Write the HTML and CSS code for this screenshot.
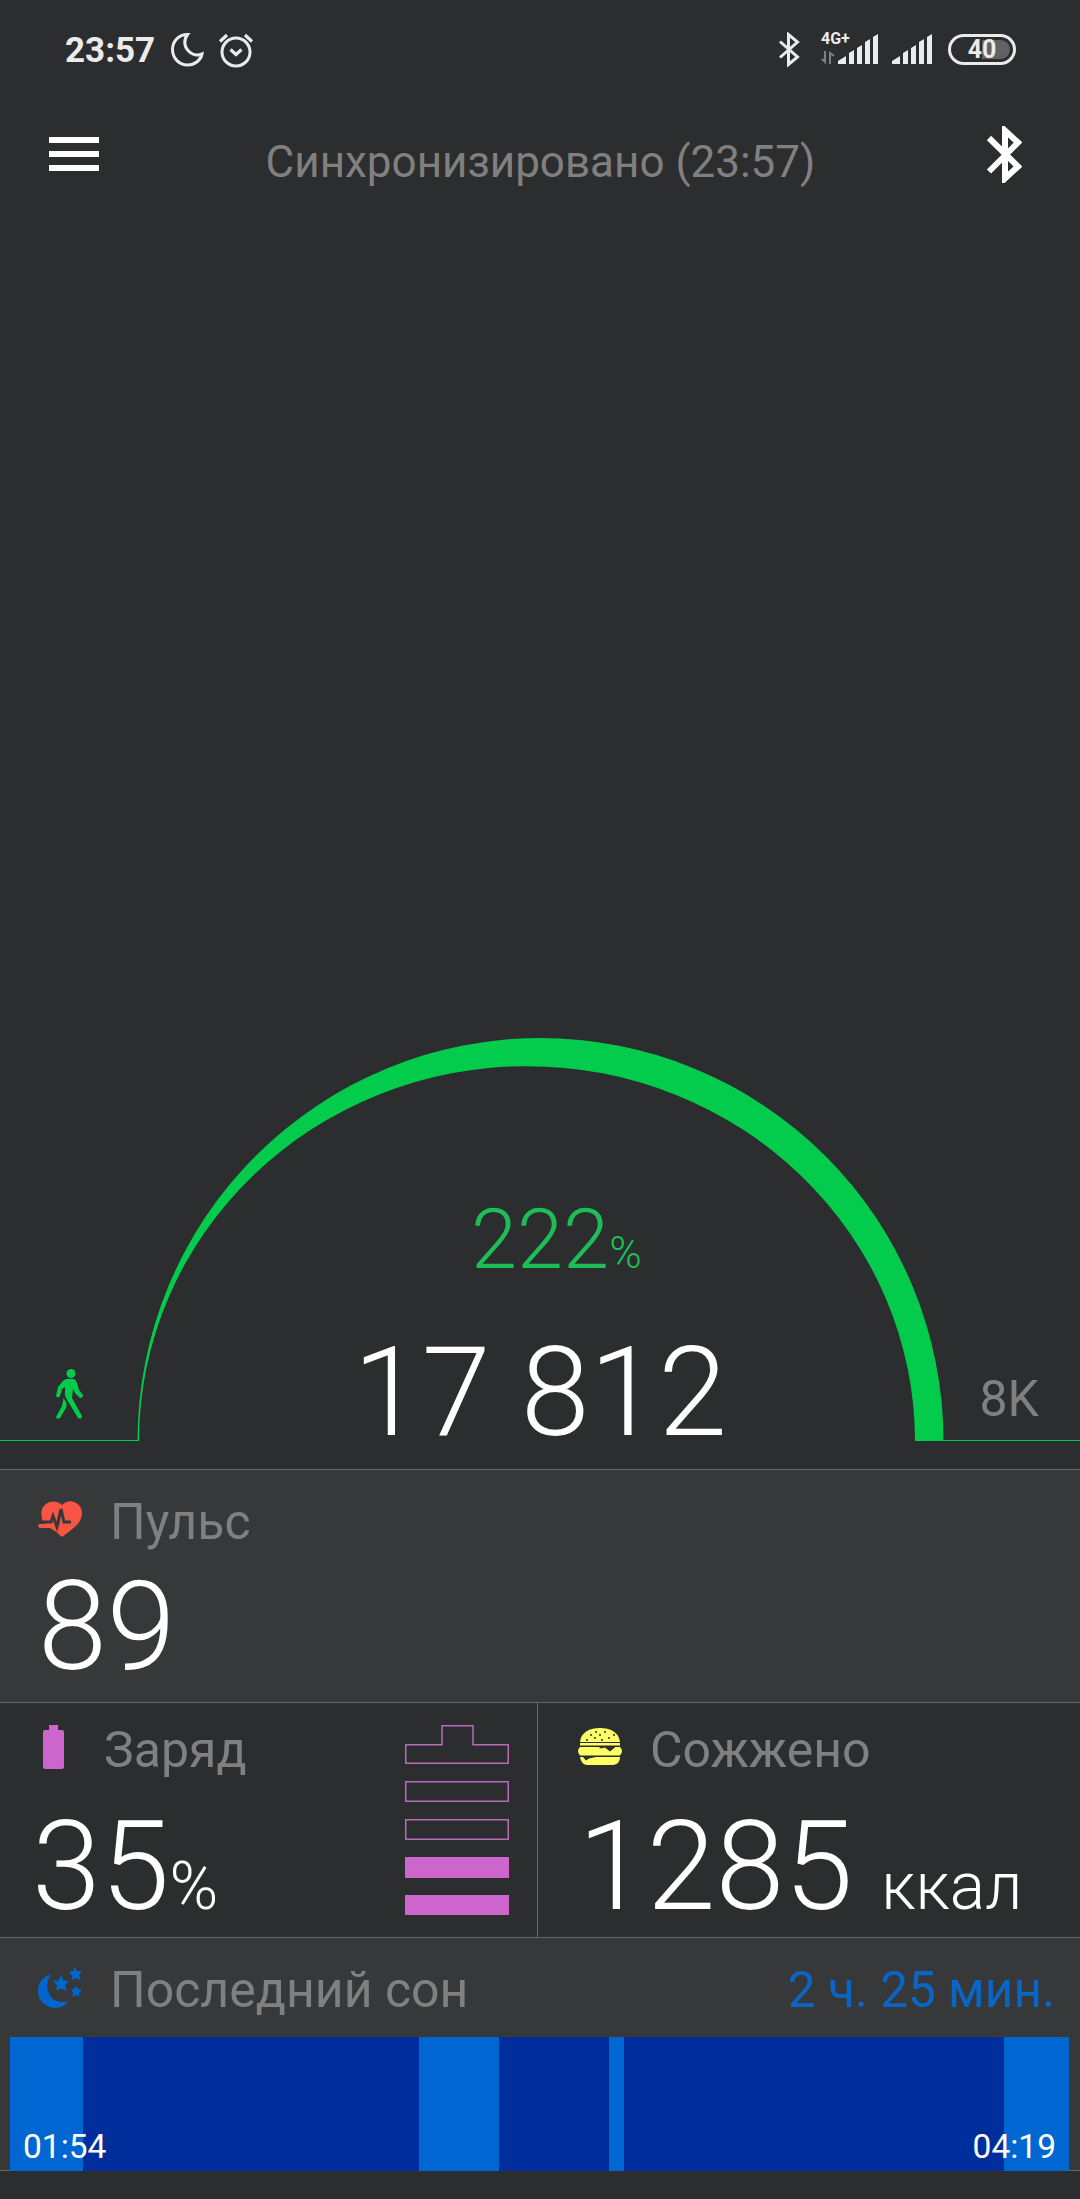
FILE: index.html
```html
<!DOCTYPE html>
<html lang="ru">
<head>
    <meta charset="UTF-8">
    <meta name="viewport" content="width=device-width, initial-scale=1.0">
    <title>Активность</title>
    <link rel="stylesheet" href="styles.css">
</head>
<body>
    <!-- Status bar -->
    <div class="status-bar">
        <span class="clock">23:57</span>
        <svg class="icon-dnd" width="34" height="36" viewBox="0 0 34 36">
            <path d="M17.500 2.500C8.500 2.500 2.500 9.500 2.500 17.500C2.500 26.500 9.500 33 17.500 33C25 33 31 28 32 22C27 24 22 22.500 18.500 19C14 14.500 13.500 8 17.500 2.500Z"/>
        </svg>
        <svg class="icon-alarm" width="36" height="36" viewBox="0 0 36 36">
            <circle cx="18" cy="20" r="14"/>
            <path d="M12.500 17.500L18 22.500L23.500 17.500M2 9.500L9 3M27 3L34 9.500"/>
        </svg>
        <div class="status-right">
            <svg class="icon-bt" width="22" height="35" viewBox="0 0 22 35">
                <path d="M2 9.500L19.500 25L10.500 32.500V2.500L19.500 10L2 25.500"/>
            </svg>
            <div class="network">
                <div class="network-type">
                    <span>4G+</span>
                    <svg width="14" height="13" viewBox="0 0 14 13">
                        <path d="M4 0V11L1 8M9 13V2L13 5"/>
                    </svg>
                </div>
                <svg class="icon-signal" width="41" height="30" viewBox="0 0 41 30">
                    <path d="M0 30V27L8 22V30ZM11 30V19L16 16V30ZM19 30V14L24 11V30ZM27 30V8L32 5V30ZM35 30V3L40 0V30Z"/>
                </svg>
            </div>
            <svg class="icon-signal" width="41" height="30" viewBox="0 0 41 30">
                <path d="M0 30V27L8 22V30ZM11 30V19L16 16V30ZM19 30V14L24 11V30ZM27 30V8L32 5V30ZM35 30V3L40 0V30Z"/>
            </svg>
            <div class="phone-battery">40</div>
        </div>
    </div>

    <!-- Header -->
    <header class="header">
        <div class="menu"><i></i><i></i><i></i></div>
        <h1>Синхронизировано (23:57)</h1>
        <svg class="header-bt" width="36" height="57" viewBox="0 0 36 57">
            <path d="M3 12L32 40.500L19 52.500V4.500L32 16.500L3 45.500"/>
        </svg>
    </header>

    <!-- Steps -->
    <section class="steps">
        <svg class="steps-arc" width="1080" height="403" viewBox="0 0 1080 403">
            <path d="M137.500 403A403 403 0 0 1 943.500 403H915A388 375 0 0 0 139 403Z"/>
            <path d="M0 402H139V403H0ZM943 402H1080V403H943Z"/>
            <g transform="translate(56 331)">
                <circle cx="15" cy="4.500" r="4.500"/>
                <path d="M10 10H18Q20 11 21 14L23 21L27 26Q27 29 24 29L19 24L17 20L16 29L26 47Q26 51 22 49L10 29Q8 26 9 23V18L6 20L4 27Q2 30 0 27L2 18L7 12Z"/>
                <path d="M7.500 29L10.500 34V38L4 49Q1 51 0 48L6 37Z"/>
            </g>
        </svg>
        <div class="steps-percent">222<small>%</small></div>
        <div class="steps-count">17 812</div>
        <div class="steps-goal">8K</div>
    </section>

    <!-- Pulse -->
    <section class="card pulse">
        <div class="card-title">
            <svg width="44" height="36" viewBox="0 0 44 36">
                <path class="heart" d="M24 4C20 0 13-1 8 3C4 6 3 10 3.500 14C3.500 18 5 21 7 23H1Q-1 26 2 27H12Q18 30 24 36Q31 31 38 25C46 17 46 6 38 2C33-1 28 0 24 4Z"/>
                <path class="beat" d="M1 21H13L15 15L19 26L23 8L26 21H33"/>
            </svg>
            <h2>Пульс</h2>
        </div>
        <div class="value">89</div>
    </section>

    <div class="row">
        <!-- Charge -->
        <section class="card charge">
            <div class="card-title">
                <svg width="22" height="44" viewBox="0 0 22 44">
                    <path d="M6 0H15V5H19Q21 5 21 7V42Q21 44 19 44H2Q0 44 0 42V7Q0 5 2 5H6Z"/>
                </svg>
                <h2>Заряд</h2>
            </div>
            <div class="value">35<small>%</small></div>
            <svg class="charge-level" width="104" height="190" viewBox="0 0 104 190">
                <path class="empty" d="M.75 38.250V19.750H37V.75H68V19.750H103.250V38.250ZM.75 56.750H103.250V76.250H.75ZM.75 94.750H103.250V114.250H.75Z"/>
                <path d="M0 132H104V153H0ZM0 170H104V190H0Z"/>
            </svg>
        </section>

        <!-- Burned -->
        <section class="card burned">
            <div class="card-title">
                <svg width="44" height="37" viewBox="0 0 44 37">
                    <path d="M2 14C3 4 12 0 22 0S41 4 42 14ZM2 15H42V17.500H2ZM2 19H42Q46 23 42 27.500H2Q-2 23 2 19ZM2 29H42Q42 36 35 37H9Q3 36 2 29Z"/>
                    <path class="dark" d="M20 18.500L23 20.500L27 19.500L32 23.500L38 18.500ZM5 29L8 32.500L11 30.500L18 29Z"/>
                    <path class="seeds" d="M17 4H19M26 4H28M12 7H14M21 7H23M35 7H37M16 10H18M30 10H32M23 12H25M8 12H10"/>
                </svg>
                <h2>Сожжено</h2>
            </div>
            <div class="value">1285 <small>ккал</small></div>
        </section>
    </div>

    <!-- Sleep -->
    <section class="card sleep">
        <div class="card-title">
            <svg width="44" height="41" viewBox="0 0 44 41">
                <path d="M13 7C4 10 0 17 0 24C0 34 8 41 17 41C23 41 28 38 30 34C23 36 17 35 13 30C8 23 8 15 13 7Z"/>
                <path d="M23 8L25.500 13.500L31 14L27 18L29 24L23 21.500L18 24L19 18L15 14L20.500 13.500ZM37 0L39 4L44 4L41 8L43 13L38 11L34 13L34 9L31 5L35 4ZM38 19L40 22L44 23L41 26L41 30L38 28L34 30L35 26L33 22L36 22Z"/>
            </svg>
            <h2>Последний сон</h2>
            <span class="sleep-total">2 ч. 25 мин.</span>
        </div>
        <div class="sleep-chart">
            <i class="light" style="flex-grow: 73"></i>
            <i style="flex-grow: 336"></i>
            <i class="light" style="flex-grow: 80"></i>
            <i style="flex-grow: 110"></i>
            <i class="light" style="flex-grow: 15"></i>
            <i style="flex-grow: 380"></i>
            <i class="light" style="flex-grow: 65"></i>
            <span class="sleep-start">01:54</span>
            <span class="sleep-end">04:19</span>
        </div>
    </section>
</body>
</html>
```
FILE: styles.css
```css
* {
    box-sizing: border-box;
}
body {
    font-family: Roboto, sans-serif;
    margin: 0;
    background-color: #2c2d2f;
    color: #fff;
    height: 2199px;
    overflow: hidden;
}
svg {
    display: block;
    flex: none;
}
h1, h2 {
    margin: 0;
    font-weight: 400;
    color: #808080;
    white-space: nowrap;
}

/* Status bar */
.status-bar {
    display: flex;
    height: 100px;
    padding: 32px 64px 0 65px;
    color: #ebebeb;
    fill: none;
    stroke: #ebebeb;
    stroke-width: 3;
}
.clock {
    width: 105px;
    font-size: 35px;
    font-weight: 700;
    line-height: 38px;
}
.icon-alarm {
    margin-left: 14px;
}
.icon-alarm path {
    stroke-width: 3.2;
}
.status-right {
    display: flex;
    margin-left: auto;
}
.icon-bt {
    margin-right: 21px;
}
.network {
    display: flex;
    margin-right: 13px;
}
.network-type {
    width: 17px;
    font-size: 16px;
    font-weight: 700;
    line-height: 14px;
}
.network-type svg {
    margin-top: 5px;
    stroke: #808080;
    stroke-width: 2;
}
.icon-signal {
    margin-top: 2px;
    fill: #ebebeb;
    stroke: none;
}
.phone-battery {
    width: 68px;
    height: 31px;
    margin: 2px 0 0 15px;
    border: 3px solid #ebebeb;
    border-radius: 16px;
    background: linear-gradient(90deg, transparent 50%, #616264 50%) content-box;
    padding: 3px;
    font-size: 25px;
    font-weight: 700;
    line-height: 20px;
    text-align: center;
}

/* Header */
.header {
    display: flex;
    justify-content: space-between;
    height: 138px;
    padding: 26px 58px 0 49px;
}
.menu {
    display: flex;
    flex-direction: column;
    gap: 8px;
    width: 50px;
    padding-top: 11px;
}
.menu i {
    height: 6px;
    background: #fff;
}
.header h1 {
    margin-right: 4px;
    padding-top: 10px;
    font-size: 44px;
    line-height: 53px;
}
.header-bt {
    fill: none;
    stroke: #fff;
    stroke-width: 6;
}

/* Steps */
.steps {
    position: relative;
    height: 1231px;
    padding-top: 800px;
}
.steps-arc {
    fill: #03cb4b;
}
.steps-percent,
.steps-count,
.steps-goal {
    position: absolute;
    line-height: 1;
    white-space: nowrap;
}
.steps-percent {
    left: 471px;
    top: 960px;
    font-size: 83px;
    font-weight: 300;
    color: #1cbf55;
}
.steps-percent small {
    font-size: 44px;
}
.steps-count {
    left: 353px;
    top: 1093px;
    font-size: 124px;
    font-weight: 300;
}
.steps-goal {
    right: 41px;
    top: 1136px;
    font-size: 50px;
    color: #808080;
}

/* Cards */
.card {
    position: relative;
    border-top: 1px solid #666768;
}
.card-title {
    display: flex;
    align-items: center;
    height: 58px;
    padding-left: 38px;
}
.card-title h2 {
    margin-left: 28px;
    font-size: 50px;
    line-height: 58px;
}
.value {
    font-size: 124px;
    font-weight: 300;
    line-height: 146px;
    white-space: nowrap;
}
.value small {
    font-size: 66px;
}
.pulse {
    height: 233px;
    padding-top: 23px;
    background: #373839;
}
.pulse .card-title svg {
    margin-top: -7px;
}
.pulse .value {
    padding-left: 38px;
    margin-top: 3px;
}
.heart {
    fill: #f85443;
}
.beat {
    fill: none;
    stroke: #373839;
    stroke-width: 3;
}
.row {
    display: grid;
    grid-template-columns: 538px 542px;
    height: 235px;
}
.charge,
.burned {
    padding-top: 18px;
}
.charge .value,
.burned .value {
    margin-top: 15px;
}
.charge {
    border-right: 1px solid #666768;
}
.charge .card-title {
    padding-left: 43px;
    fill: #cc66cc;
}
.charge .card-title svg {
    margin-top: -7px;
}
.charge .card-title h2 {
    margin-left: 39px;
}
.charge .value {
    padding-left: 32px;
}
.charge-level {
    position: absolute;
    right: 28px;
    top: 22px;
    fill: #cc66cc;
}
.charge-level .empty {
    fill: none;
    stroke: #b86bb9;
    stroke-width: 1.5;
}
.burned .card-title {
    padding-left: 40px;
    fill: #ffff66;
}
.burned .card-title svg {
    margin-top: -8px;
}
.burned .value {
    padding-left: 40px;
}
.burned .value small {
    margin-left: -2px;
}
.burned .dark {
    fill: #2c2d2f;
}
.seeds {
    stroke: #2c2d2f;
    stroke-width: 1.4;
}
.sleep {
    height: 234px;
    padding-top: 23px;
    background: #373839;
    border-bottom: 1px solid #666768;
}
.sleep .card-title {
    fill: #0066cf;
    padding-right: 25px;
}
.sleep .card-title svg {
    margin-top: -6px;
}
.sleep-total {
    margin-left: auto;
    font-size: 49.5px;
    color: #0b65c6;
    white-space: nowrap;
}
.sleep-chart {
    position: relative;
    display: flex;
    height: 134px;
    margin: 18px 11px 0 10px;
}
.sleep-chart i {
    background: #002d9c;
}
.sleep-chart .light {
    background: #0066d1;
}
.sleep-start,
.sleep-end {
    position: absolute;
    bottom: 5px;
    font-size: 33.5px;
    line-height: 39px;
}
.sleep-start {
    left: 13px;
}
.sleep-end {
    right: 13px;
}
```
